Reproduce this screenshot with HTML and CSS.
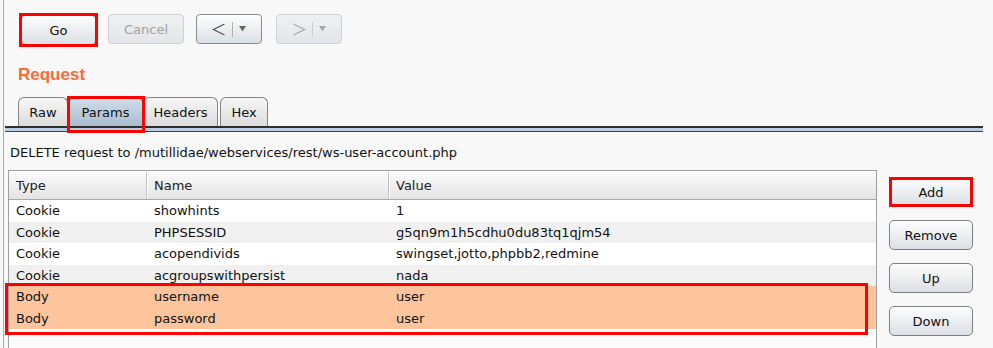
FILE: index.html
```html
<!doctype html>
<html lang="en">
<head>
    <meta charset="UTF-8">
    <title>Repeater - Request</title>
    <link rel="stylesheet" href="styles.css">
</head>
<body>
    <div class="frame">
        <div class="toolbar">
            <button class="btn btn-go marked">Go</button>
            <button class="btn btn-cancel disabled">Cancel</button>
            <button class="btn btn-nav">
                <svg width="14" height="13" viewBox="0 0 14 13"><polyline points="12.5,1 1.5,6.5 12.5,12" fill="none" stroke="#555" stroke-width="1.3"/></svg>
                <span class="nav-sep"></span>
                <svg width="7" height="6" viewBox="0 0 7 6"><polygon points="0,0 7,0 3.5,5.5" fill="#666"/></svg>
            </button>
            <button class="btn btn-nav disabled">
                <svg width="14" height="13" viewBox="0 0 14 13"><polyline points="1.5,1 12.5,6.5 1.5,12" fill="none" stroke="#aaa" stroke-width="1.3"/></svg>
                <span class="nav-sep"></span>
                <svg width="7" height="6" viewBox="0 0 7 6"><polygon points="0,0 7,0 3.5,5.5" fill="#aaa"/></svg>
            </button>
        </div>

        <h2 class="section-title">Request</h2>

        <div class="tabs">
            <div class="tab tab-raw">Raw</div>
            <div class="tab tab-params active marked">Params</div>
            <div class="tab tab-headers">Headers</div>
            <div class="tab tab-hex">Hex</div>
        </div>
        <div class="tab-rule"></div>

        <div class="request-line">DELETE request to /mutillidae/webservices/rest/ws-user-account.php</div>

        <div class="main">
            <div class="params-table">
                <div class="grid-row head">
                    <div class="cell">Type</div>
                    <div class="cell">Name</div>
                    <div class="cell">Value</div>
                </div>
                <div class="grid-row">
                    <div class="cell">Cookie</div>
                    <div class="cell">showhints</div>
                    <div class="cell">1</div>
                </div>
                <div class="grid-row alt">
                    <div class="cell">Cookie</div>
                    <div class="cell">PHPSESSID</div>
                    <div class="cell">g5qn9m1h5cdhu0du83tq1qjm54</div>
                </div>
                <div class="grid-row">
                    <div class="cell">Cookie</div>
                    <div class="cell">acopendivids</div>
                    <div class="cell">swingset,jotto,phpbb2,redmine</div>
                </div>
                <div class="grid-row alt">
                    <div class="cell">Cookie</div>
                    <div class="cell">acgroupswithpersist</div>
                    <div class="cell">nada</div>
                </div>
                <div class="body-rows marked">
                    <div class="grid-row sel">
                        <div class="cell">Body</div>
                        <div class="cell">username</div>
                        <div class="cell">user</div>
                    </div>
                    <div class="grid-row sel">
                        <div class="cell">Body</div>
                        <div class="cell">password</div>
                        <div class="cell">user</div>
                    </div>
                </div>
            </div>

            <div class="side-buttons">
                <button class="btn btn-side marked">Add</button>
                <button class="btn btn-side">Remove</button>
                <button class="btn btn-side">Up</button>
                <button class="btn btn-side">Down</button>
            </div>
        </div>
    </div>
</body>
</html>
```

FILE: styles.css
```css
body {
    margin: 0;
    background-color: #f8f8f8;
    font-family: "DejaVu Sans", Verdana, sans-serif;
    font-size: 13px;
    color: #111;
}
.frame {
    margin-left: 3px;
    border-left: 1px solid #a9a9a9;
    height: 348px;
    overflow: hidden;
}

/* red annotation boxes drawn over the screenshot */
.marked {
    position: relative;
}
.marked::after {
    content: "";
    position: absolute;
    border: 3px solid #ff0000;
    pointer-events: none;
}

.toolbar {
    display: flex;
    align-items: flex-start;
    padding: 14px 0 0 17px;
    height: 30px;
}
.btn {
    height: 30px;
    border: 1px solid #8a8a8a;
    border-radius: 4px;
    background: linear-gradient(#fdfdfd, #eef0f2 45%, #dcdfe4);
    font-family: "DejaVu Sans", Verdana, sans-serif;
    font-size: 13px;
    color: #111;
    padding: 0;
}
.btn.disabled {
    border-color: #cfd1d4;
    background: linear-gradient(#eff0f2, #e3e5e8);
    color: #a3a3a3;
}
.btn-go {
    width: 75px;
    margin-top: 1px;
}
.btn-go::after {
    top: -3px;
    left: -3px;
    right: -3px;
    bottom: -3px;
}
.btn-cancel {
    width: 76px;
    margin-left: 12px;
}
.btn-nav {
    width: 66px;
    margin-left: 12px;
    display: flex;
    align-items: center;
    justify-content: center;
    gap: 6px;
}
.btn-nav.disabled {
    margin-left: 14px;
}
.nav-sep {
    width: 1px;
    height: 15px;
    background-color: #b0b0b0;
}
.btn-nav.disabled .nav-sep {
    background-color: #cfcfcf;
}

.section-title {
    margin: 21px 0 0 14px;
    font-family: "Liberation Sans", Arial, sans-serif;
    font-size: 17px;
    line-height: 20px;
    font-weight: bold;
    color: #fc6a3a;
}

.tabs {
    display: flex;
    margin: 12px 0 0 14px;
    height: 29px;
}
.tab {
    box-sizing: border-box;
    height: 29px;
    border: 1px solid #858585;
    border-bottom: none;
    border-radius: 6px 6px 0 0;
    background: linear-gradient(#f6f6f6, #dcdcdc);
    text-align: center;
    line-height: 30px;
    color: #111;
}
.tab-raw { width: 50px; }
.tab-params { width: 75px; }
.tab-headers { width: 75px; }
.tab-hex { width: 48px; margin-left: 2px; }
.tab.active {
    background: linear-gradient(#cfdde9, #a9bdd0);
}
.tab-params::after {
    top: -2px;
    left: -2px;
    right: -3px;
    bottom: -7px;
}
.tab-rule {
    margin-left: 1px;
    width: 978px;
    height: 3px;
    border-top: 2px solid #2e2e2e;
    border-bottom: 1px solid #444;
    background-color: #b9cde0;
}

.request-line {
    margin: 13px 0 0 6px;
    line-height: 16px;
}

.main {
    display: flex;
    margin-top: 9px;
    height: 180px;
}
.params-table {
    margin-left: 4px;
    width: 867px;
    border: 1px solid #9e9e9e;
    border-bottom: none;
    background-color: #fbfbfb;
}
.grid-row {
    display: grid;
    grid-template-columns: 137px 242px 1fr;
    height: 21.5px;
    align-items: center;
    background-color: #fff;
}
.grid-row.alt {
    background-color: #f0f0f0;
}
.grid-row.sel {
    background-color: #fec59c;
}
.cell {
    padding-left: 7px;
    white-space: nowrap;
}
.cell + .cell {
    padding-left: 8px;
}
.grid-row.head {
    height: 27px;
    border-top: 1px solid #fff;
    border-bottom: 1px solid #a8a8a8;
    background: linear-gradient(#fbfbfb, #e4e4e4);
    color: #222;
}
.grid-row.head .cell {
    height: 27px;
    line-height: 27px;
}
.grid-row.head .cell + .cell {
    border-left: 1px solid #c2c2c2;
    box-shadow: inset 1px 0 #fff;
    padding-left: 7px;
}
.body-rows::after {
    top: -3px;
    left: -4px;
    right: 8px;
    bottom: -6px;
}

.side-buttons {
    display: flex;
    flex-direction: column;
    gap: 13px;
    margin-left: 12px;
    padding-top: 7px;
}
.btn-side {
    width: 84px;
    border-radius: 5px;
    border-color: #7f7f7f;
}
.btn-side::after {
    top: -1px;
    left: -1px;
    right: -1px;
    bottom: -1px;
}
```
